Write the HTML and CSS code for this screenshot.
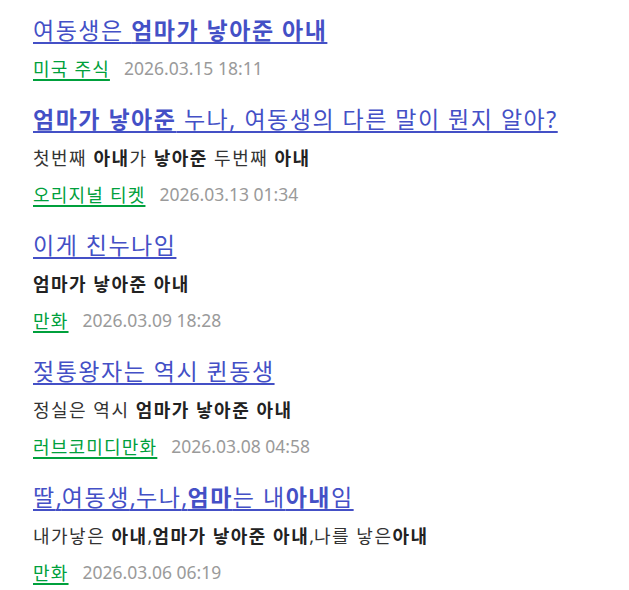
FILE: index.html
```html
<!DOCTYPE html>
<html lang="ko">
<head>
    <meta charset="UTF-8">
    <meta name="viewport" content="width=device-width, initial-scale=1.0">
    <title>검색 결과</title>
    <link rel="stylesheet" href="styles.css">
</head>
<body>
    <ul class="result-list">
        <li class="result">
            <a href="#" class="result-title">여동생은 <b>엄마가 낳아준 아내</b></a>
            <div class="result-meta">
                <a href="#" class="result-cat">미국 주식</a>
                <span class="result-date">2026.03.15 18:11</span>
            </div>
        </li>
        <li class="result">
            <a href="#" class="result-title"><b>엄마가 낳아준</b> 누나, 여동생의 다른 말이 뭔지 알아?</a>
            <p class="result-desc">첫번째 <b>아내</b>가 <b>낳아준</b> 두번째 <b>아내</b></p>
            <div class="result-meta">
                <a href="#" class="result-cat">오리지널 티켓</a>
                <span class="result-date">2026.03.13 01:34</span>
            </div>
        </li>
        <li class="result">
            <a href="#" class="result-title">이게 친누나임</a>
            <p class="result-desc"><b>엄마가 낳아준 아내</b></p>
            <div class="result-meta">
                <a href="#" class="result-cat">만화</a>
                <span class="result-date">2026.03.09 18:28</span>
            </div>
        </li>
        <li class="result">
            <a href="#" class="result-title">젖통왕자는 역시 퀸동생</a>
            <p class="result-desc">정실은 역시 <b>엄마가 낳아준 아내</b></p>
            <div class="result-meta">
                <a href="#" class="result-cat">러브코미디만화</a>
                <span class="result-date">2026.03.08 04:58</span>
            </div>
        </li>
        <li class="result">
            <a href="#" class="result-title">딸<span class="sep">,</span>여동생<span class="sep">,</span>누나<span class="sep">,</span><b>엄마</b>는 내<b>아내</b>임</a>
            <p class="result-desc">내가낳은 <b>아내</b><span class="sep">,</span><b>엄마가 낳아준 아내</b><span class="sep">,</span>나를 낳은<b>아내</b></p>
            <div class="result-meta">
                <a href="#" class="result-cat">만화</a>
                <span class="result-date">2026.03.06 06:19</span>
            </div>
        </li>
    </ul>
</body>
</html>
```

FILE: styles.css
```css
* {
    margin: 0;
    padding: 0;
    box-sizing: border-box;
}

body {
    font-family: "Noto Sans", "Noto Sans CJK KR", sans-serif;
    background: #fff;
    color: #333;
    padding: 11px 33px;
}

.result-list {
    list-style: none;
    display: flex;
    flex-direction: column;
    gap: 14px;
}

.result {
    display: flex;
    flex-direction: column;
    align-items: flex-start;
}

.result-title {
    display: block;
    height: 38px;
    line-height: 38px;
    font-size: 23px;
    letter-spacing: 1.5px;
    color: #4450c6;
    text-decoration: underline;
    text-decoration-thickness: 2px;
    text-underline-offset: 3px;
}

.result-title b {
    font-weight: 700;
}

/* commas between words sit tight */
.sep {
    letter-spacing: 0;
}

.result-desc {
    height: 37px;
    padding-top: 4px;
    line-height: 33px;
    font-size: 18px;
    letter-spacing: 1.5px;
    color: #333;
}

.result-desc b {
    font-weight: 700;
    color: #222;
}

.result-meta {
    display: flex;
    align-items: center;
    gap: 14px;
    height: 37px;
}

.result-cat {
    font-size: 18px;
    letter-spacing: 1.2px;
    color: #00a03c;
    text-decoration: underline;
    text-decoration-thickness: 2px;
    text-underline-offset: 3px;
}

.result-date {
    font-size: 17.5px;
    color: #9a9a9a;
}
```
